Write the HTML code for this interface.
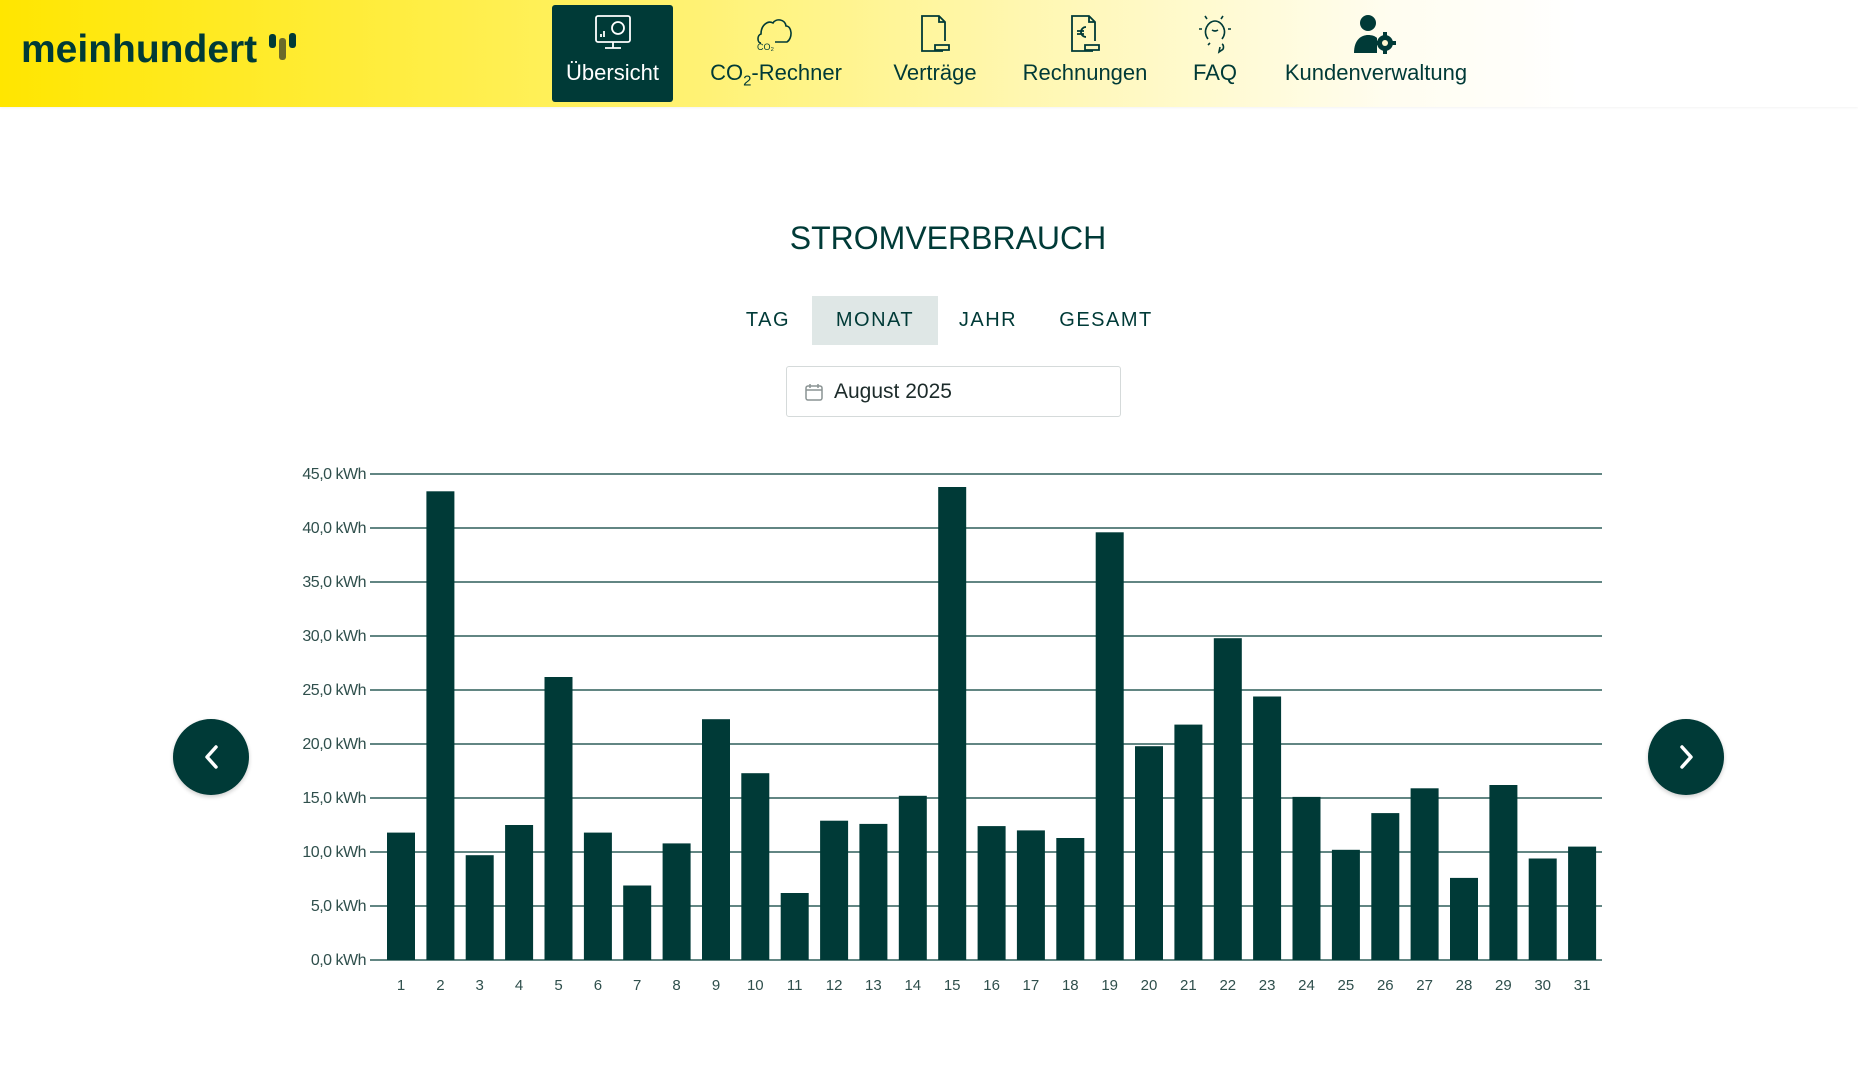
<!DOCTYPE html>
<html><head><meta charset="utf-8"><style>
*{margin:0;padding:0;box-sizing:border-box}
body{width:1858px;height:1078px;background:#fff;font-family:"Liberation Sans",sans-serif;color:#003a37;position:relative;overflow:hidden}
.hdr{position:absolute;left:0;top:0;width:1858px;height:107px;background:linear-gradient(90deg,#ffe600 0%,#fff05a 30%,#fff7b0 55%,#fffdf0 75%,#fff 85%);box-shadow:0 1px 2px rgba(0,0,0,.05)}
.logo{position:absolute;left:21px;top:28px;font-size:39px;font-weight:bold;letter-spacing:0px;color:#003a37}
.nav{position:absolute;top:5px;height:97px;text-align:center;font-size:22px;color:#003a37}
.nav .lbl{position:absolute;left:0;right:0;top:55px;white-space:nowrap}
.nav svg{position:absolute;left:50%;top:8px;transform:translateX(-50%)}
.act{background:#003a37;color:#fff;border-radius:3px}
.title{position:absolute;left:0;width:1896px;top:220px;text-align:center;font-size:32px;letter-spacing:0px}
.tab{position:absolute;top:296px;height:49px;line-height:49px;font-size:20px;letter-spacing:1.5px;text-align:center}
.date{position:absolute;left:786px;top:366px;width:335px;height:51px;border:1px solid #d5dada;border-radius:3px;font-size:21px;line-height:49px;padding-left:47px;color:#1c2b2a}
.arr{position:absolute;width:76px;height:76px;border-radius:50%;background:#003a37;top:719px;box-shadow:0 2px 4px rgba(0,0,0,.2)}
</style></head><body>
<div class="hdr"></div>
<div class="logo">meinhundert <span style="display:inline-block;width:30px;height:30px;vertical-align:-2px;position:relative"><svg width="30" height="34" viewBox="0 0 30 34"><rect x="1" y="4" width="7" height="14" rx="3" fill="#003a37"/><rect x="11" y="8" width="7" height="22" rx="3" fill="#6b6a2a"/><rect x="21" y="3" width="7" height="15" rx="3" fill="#003a37"/></svg></span></div>

<div class="nav act" style="left:552px;width:121px"><svg width="44" height="40" viewBox="0 0 44 40" fill="none" stroke="#fff" stroke-width="1.8"><rect x="5" y="3" width="34" height="26" rx="2"/><circle cx="27" cy="15" r="6"/><path d="M10 24v-3M13 24v-6M22 29v6M14 35h16"/></svg><div class="lbl">Übersicht</div></div>
<div class="nav" style="left:700px;width:152px"><svg width="50" height="40" viewBox="0 0 50 40" fill="none" stroke="#003a37" stroke-width="1.6"><path d="M10 30c-4 0-4-8 0-9c0-9 7-14 12-11c3-5 12-4 13 3c6 0 7 12 1 16H24"/><text x="6" y="37" font-size="9" fill="#003a37" stroke="none" font-family="Liberation Sans">CO₂</text></svg><div class="lbl">CO<sub style="font-size:15px">2</sub>-Rechner</div></div>
<div class="nav" style="left:885px;width:100px"><svg width="44" height="44" viewBox="0 0 44 44" fill="none" stroke="#003a37" stroke-width="1.8"><path d="M30 38H9V3h17l6 6v19M26 3v6h6"/><path d="M22 32h14v5H22z"/></svg><div class="lbl">Verträge</div></div>
<div class="nav" style="left:1015px;width:140px"><svg width="44" height="44" viewBox="0 0 44 44" fill="none" stroke="#003a37" stroke-width="1.8"><path d="M30 38H9V3h17l6 6v19M26 3v6h6"/><path d="M22 32h14v5H22z"/><path d="M23 14a5 5 0 1 0 0 10M14 18h7M14 21h7"/></svg><div class="lbl">Rechnungen</div></div>
<div class="nav" style="left:1185px;width:60px"><svg width="44" height="44" viewBox="0 0 44 44" fill="none" stroke="#003a37" stroke-width="1.6"><path d="M15 26c-6-8 0-18 7-18s13 10 7 18M27 34l-1 5l3-2c2-1 2-5 0-6M17 30l-2 2M12 3l2 3M30 3l-2 3M6 16h3M35 16h3"/><path d="M19 17q3 2 6 0"/></svg><div class="lbl">FAQ</div></div>
<div class="nav" style="left:1275px;width:202px"><svg width="56" height="46" viewBox="0 0 56 46" fill="#003a37"><circle cx="20" cy="10" r="8"/><path d="M6 40c0-14 8-18 14-18c4 0 7 1 9 3v15z"/><circle cx="37" cy="30" r="8"/><circle cx="37" cy="30" r="3" fill="#fff8d0"/><path d="M35 19h4v4h-4zM35 37h4v4h-4zM26 28h4v4h-4zM44 28h4v4h-4z"/></svg><div class="lbl">Kundenverwaltung</div></div>

<div class="title">STROMVERBRAUCH</div>
<div class="tab" style="left:735px;width:66px">TAG</div>
<div class="tab" style="left:812px;width:126px;background:#dfe7e6">MONAT</div>
<div class="tab" style="left:950px;width:76px">JAHR</div>
<div class="tab" style="left:1050px;width:112px">GESAMT</div>
<div class="date"><svg style="position:absolute;left:17px;top:15px" width="20" height="20" viewBox="0 0 20 20" fill="none" stroke="#8a9393" stroke-width="1.5"><rect x="2" y="4" width="16" height="14" rx="2"/><path d="M2 8h16M6 2v4M14 2v4"/></svg>August 2025</div>

<svg style="position:absolute;left:0;top:0" width="1858" height="1078">
<g stroke="#2f5e5a" stroke-width="1.5">
<line x1="370" x2="1602" y1="474" y2="474"/><line x1="370" x2="1602" y1="528" y2="528"/><line x1="370" x2="1602" y1="582" y2="582"/><line x1="370" x2="1602" y1="636" y2="636"/><line x1="370" x2="1602" y1="690" y2="690"/><line x1="370" x2="1602" y1="744" y2="744"/><line x1="370" x2="1602" y1="798" y2="798"/><line x1="370" x2="1602" y1="852" y2="852"/><line x1="370" x2="1602" y1="906" y2="906"/><line x1="370" x2="1602" y1="960" y2="960"/>
</g>
<g font-family="Liberation Sans" font-size="16" fill="#2f4f4c" text-anchor="end" letter-spacing="-0.5">
<text x="366" y="479">45,0 kWh</text><text x="366" y="533">40,0 kWh</text><text x="366" y="587">35,0 kWh</text><text x="366" y="641">30,0 kWh</text><text x="366" y="695">25,0 kWh</text><text x="366" y="749">20,0 kWh</text><text x="366" y="803">15,0 kWh</text><text x="366" y="857">10,0 kWh</text><text x="366" y="911">5,0 kWh</text><text x="366" y="965">0,0 kWh</text>
</g>
<g fill="#003a37">
<rect x="387" y="832.6" width="28" height="127.4"/><rect x="426.4" y="491.3" width="28" height="468.7"/><rect x="465.7" y="855.2" width="28" height="104.8"/><rect x="505.1" y="825" width="28" height="135"/><rect x="544.5" y="677" width="28" height="283"/><rect x="583.9" y="832.6" width="28" height="127.4"/><rect x="623.2" y="885.5" width="28" height="74.5"/><rect x="662.6" y="843.4" width="28" height="116.6"/><rect x="702" y="719.2" width="28" height="240.8"/><rect x="741.3" y="773.2" width="28" height="186.8"/><rect x="780.7" y="893" width="28" height="67"/><rect x="820.1" y="820.7" width="28" height="139.3"/><rect x="859.4" y="823.9" width="28" height="136.1"/><rect x="898.8" y="795.8" width="28" height="164.2"/><rect x="938.2" y="487" width="28" height="473"/><rect x="977.6" y="826.1" width="28" height="133.9"/><rect x="1016.9" y="830.4" width="28" height="129.6"/><rect x="1056.3" y="838" width="28" height="122"/><rect x="1095.7" y="532.3" width="28" height="427.7"/><rect x="1135" y="746.2" width="28" height="213.8"/><rect x="1174.4" y="724.6" width="28" height="235.4"/><rect x="1213.8" y="638.2" width="28" height="321.8"/><rect x="1253.1" y="696.5" width="28" height="263.5"/><rect x="1292.5" y="796.9" width="28" height="163.1"/><rect x="1331.9" y="849.8" width="28" height="110.2"/><rect x="1371.3" y="813.1" width="28" height="146.9"/><rect x="1410.6" y="788.3" width="28" height="171.7"/><rect x="1450" y="877.9" width="28" height="82.1"/><rect x="1489.4" y="785" width="28" height="175"/><rect x="1528.7" y="858.5" width="28" height="101.5"/><rect x="1568.1" y="846.6" width="28" height="113.4"/>
</g>
<g font-family="Liberation Sans" font-size="15" fill="#2f4f4c" text-anchor="middle">
<text x="401" y="990">1</text><text x="440.4" y="990">2</text><text x="479.7" y="990">3</text><text x="519.1" y="990">4</text><text x="558.5" y="990">5</text><text x="597.9" y="990">6</text><text x="637.2" y="990">7</text><text x="676.6" y="990">8</text><text x="716" y="990">9</text><text x="755.3" y="990">10</text><text x="794.7" y="990">11</text><text x="834.1" y="990">12</text><text x="873.4" y="990">13</text><text x="912.8" y="990">14</text><text x="952.2" y="990">15</text><text x="991.6" y="990">16</text><text x="1030.9" y="990">17</text><text x="1070.3" y="990">18</text><text x="1109.7" y="990">19</text><text x="1149" y="990">20</text><text x="1188.4" y="990">21</text><text x="1227.8" y="990">22</text><text x="1267.1" y="990">23</text><text x="1306.5" y="990">24</text><text x="1345.9" y="990">25</text><text x="1385.3" y="990">26</text><text x="1424.6" y="990">27</text><text x="1464" y="990">28</text><text x="1503.4" y="990">29</text><text x="1542.7" y="990">30</text><text x="1582.1" y="990">31</text>
</g>
</svg>

<div class="arr" style="left:173px"><svg width="76" height="76" viewBox="0 0 76 76" fill="none" stroke="#fff" stroke-width="3.5" stroke-linecap="round" stroke-linejoin="round"><path d="M43 28L34 38L43 48"/></svg></div>
<div class="arr" style="left:1648px"><svg width="76" height="76" viewBox="0 0 76 76" fill="none" stroke="#fff" stroke-width="3.5" stroke-linecap="round" stroke-linejoin="round"><path d="M34 28L43 38L34 48"/></svg></div>
</body></html>
